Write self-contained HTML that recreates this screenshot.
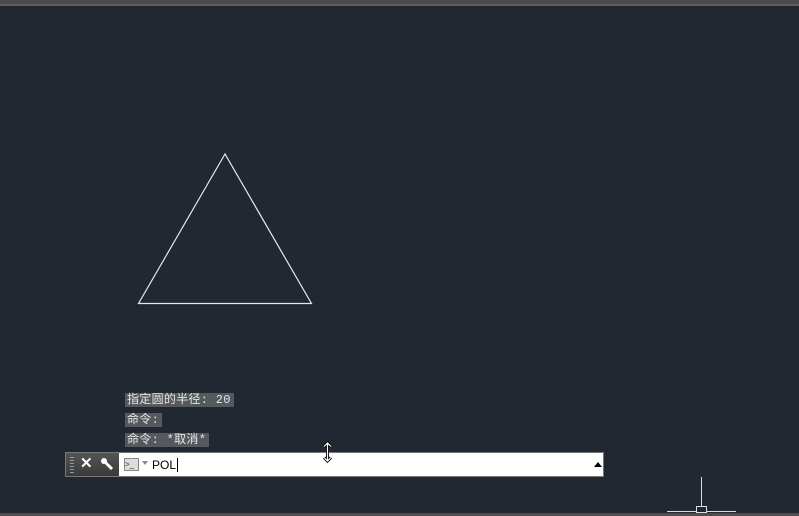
<!DOCTYPE html>
<html><head><meta charset="utf-8"><style>
body{margin:0;width:799px;height:516px;background:#222831;position:relative;overflow:hidden;font-family:"Liberation Sans","Noto Sans CJK SC",sans-serif}
.top{position:absolute;left:0;top:0;width:799px;height:4px;background:#4b4b4b;border-bottom:2px solid #5e5e5e}
.bot{position:absolute;left:0;top:513px;width:799px;height:3px;background:#4e4e4e}
.lbl{position:absolute;left:125px;height:14px;line-height:14px;background:#55595e;color:#e6e6e6;font-size:12px;padding:0 3px 0 2px;font-family:"Liberation Mono","Noto Sans CJK SC",monospace;white-space:nowrap;letter-spacing:0.3px}
.bar{position:absolute;left:65px;top:452px;width:539px;height:25px;border:1px solid #777;box-sizing:border-box;background:#fff}
.grip{position:absolute;left:0;top:0;width:53px;height:23px;background:linear-gradient(#555,#3a3a3a)}
</style></head><body>
<div class="top"></div>
<svg style="position:absolute;left:0;top:0" width="799" height="516">
<polygon points="225,154 138.5,303.5 311.5,303.5" fill="none" stroke="#e8e8e8" stroke-width="1.2"/>
<line x1="701.5" y1="477" x2="701.5" y2="507" stroke="#ddd"/>
<line x1="667" y1="511.5" x2="736" y2="511.5" stroke="#ddd"/>
<rect x="696.5" y="506.5" width="10" height="6" fill="#222831" stroke="#ddd"/>
</svg>
<div class="lbl" style="top:393px">指定圆的半径: 20</div>
<div class="lbl" style="top:413px">命令:</div>
<div class="lbl" style="top:433px">命令: *取消*</div>
<div class="bar">
<div class="grip">
<div style="position:absolute;left:4px;top:4px;width:4px;height:16px;background:repeating-linear-gradient(#999 0 1px,transparent 1px 3px)"></div>
<div style="position:absolute;left:14px;top:1px;color:#fff;font-size:15px;font-weight:bold">✕</div>
<svg style="position:absolute;left:34px;top:4px" width="16" height="16"><path d="M3 3l9 9" stroke="#fff" stroke-width="3"/><circle cx="4" cy="4" r="3" fill="#fff"/></svg>
</div>
<div style="position:absolute;left:58px;top:5px;width:13px;height:11px;border:1px solid #888;background:#ddd;font-size:8px;line-height:11px;color:#333">&gt;_</div>
<div style="position:absolute;left:76px;top:8px;width:0;height:0;border-left:3px solid transparent;border-right:3px solid transparent;border-top:4px solid #888"></div>
<div style="position:absolute;left:86px;top:5px;font-size:12px;color:#000">POL<span style="border-left:1px solid #000;margin-left:1px"></span></div>
<div style="position:absolute;left:528px;top:9px;width:0;height:0;border-left:4px solid transparent;border-right:4px solid transparent;border-bottom:5px solid #000"></div>
</div>
<svg style="position:absolute;left:0;top:0;z-index:5" width="799" height="516">
<path d="M327.5 443v18M324 446.5l3.5-3.5 3.5 3.5M324 457.5l3.5 3.5 3.5-3.5" stroke="#000" stroke-width="3" fill="none"/>
<path d="M327.5 443v18M324 446.5l3.5-3.5 3.5 3.5M324 457.5l3.5 3.5 3.5-3.5" stroke="#fff" stroke-width="1.2" fill="none"/>
</svg>
<div class="bot"></div>
</body></html>
